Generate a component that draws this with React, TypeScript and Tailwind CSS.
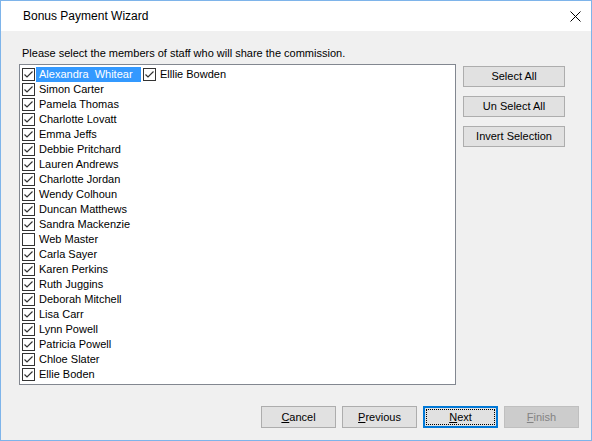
import React from 'react';

const staff = [
  'Alexandra  Whitear',
  'Simon Carter',
  'Pamela Thomas',
  'Charlotte Lovatt',
  'Emma Jeffs',
  'Debbie Pritchard',
  'Lauren Andrews',
  'Charlotte Jordan',
  'Wendy Colhoun',
  'Duncan Matthews',
  'Sandra Mackenzie',
  'Web Master',
  'Carla Sayer',
  'Karen Perkins',
  'Ruth Juggins',
  'Deborah Mitchell',
  'Lisa Carr',
  'Lynn Powell',
  'Patricia Powell',
  'Chloe Slater',
  'Ellie Boden',
];

function Check({ checked }: { checked: boolean }) {
  return (
    <span className="w-[13px] h-[13px] shrink-0 border border-[#333333] bg-white flex items-center justify-center">
      {checked && (
        <svg width="11" height="11" viewBox="0 0 11 11">
          <path d="M1.5 5.5 L4 8 L9.5 2.5" fill="none" stroke="#333333" strokeWidth="1.2" />
        </svg>
      )}
    </span>
  );
}

function Row({ name, checked, selected }: { name: string; checked: boolean; selected?: boolean }) {
  return (
    <div className="h-[15px] flex items-center">
      <Check checked={checked} />
      <span
        className={
          'ml-[1px] h-[15px] flex items-center pl-[3px] pr-[3px] whitespace-pre ' +
          (selected ? 'bg-[#3399ff] text-white w-[105px]' : 'text-black')
        }
      >
        {name}
      </span>
    </div>
  );
}

function Btn({ children, className = '' }: { children: React.ReactNode; className?: string }) {
  return (
    <div
      className={
        'h-[21px] border border-[#adadad] bg-[#e1e1e1] flex items-center justify-center text-black ' + className
      }
    >
      {children}
    </div>
  );
}

export default function App() {
  return (
    <div
      className="w-[592px] h-[441px] border border-[#7eb4ea] bg-[#f0f0f0] flex flex-col text-[11px] leading-[13px]"
      style={{ fontFamily: '"Liberation Sans", Arial, sans-serif' }}
    >
      <div className="h-[30px] bg-white flex items-center justify-between pl-[22px] pr-[10px] shrink-0">
        <span className="text-[12px] text-black">Bonus Payment Wizard</span>
        <svg width="11" height="11" viewBox="0 0 11 11">
          <path d="M0.5 0.5 L10.5 10.5 M10.5 0.5 L0.5 10.5" stroke="#000" strokeWidth="1" />
        </svg>
      </div>

      <div className="flex-1 flex flex-col pl-[18px] pr-[12px]">
        <div className="mt-[16px] pl-[3px] text-black">Please select the members of staff who will share the commission.</div>

        <div className="mt-[4px] flex">
          <div className="w-[437px] h-[321px] border border-[#828790] bg-white flex pl-[2px] pt-[2px]">
            <div className="w-[121px] flex flex-col">
              {staff.map((s, i) => (
                <Row key={s} name={s} checked={s !== 'Web Master'} selected={i === 0} />
              ))}
            </div>
            <div className="flex flex-col">
              <Row name="Elllie Bowden" checked />
            </div>
          </div>

          <div className="ml-[7px] mt-[2px] flex flex-col gap-[9px]">
            <Btn className="w-[102px]">Select All</Btn>
            <Btn className="w-[102px]">Un Select All</Btn>
            <Btn className="w-[102px]">Invert Selection</Btn>
          </div>
        </div>

        <div className="mt-[21px] flex justify-end gap-[6px]">
          <Btn className="w-[75px] h-[22px]">
            <span><span className="underline">C</span>ancel</span>
          </Btn>
          <Btn className="w-[75px] h-[22px]">
            <span><span className="underline">P</span>revious</span>
          </Btn>
          <div className="w-[75px] h-[22px] border-2 border-[#0078d7] bg-[#e1e1e1] p-[1px]">
            <div className="w-full h-full border border-dotted border-black flex items-center justify-center text-black">
              <span><span className="underline">N</span>ext</span>
            </div>
          </div>
          <div className="w-[75px] h-[22px] border border-[#bfbfbf] bg-[#cccccc] flex items-center justify-center text-[#838383]">
            <span><span className="underline">F</span>inish</span>
          </div>
        </div>
      </div>
    </div>
  );
}
